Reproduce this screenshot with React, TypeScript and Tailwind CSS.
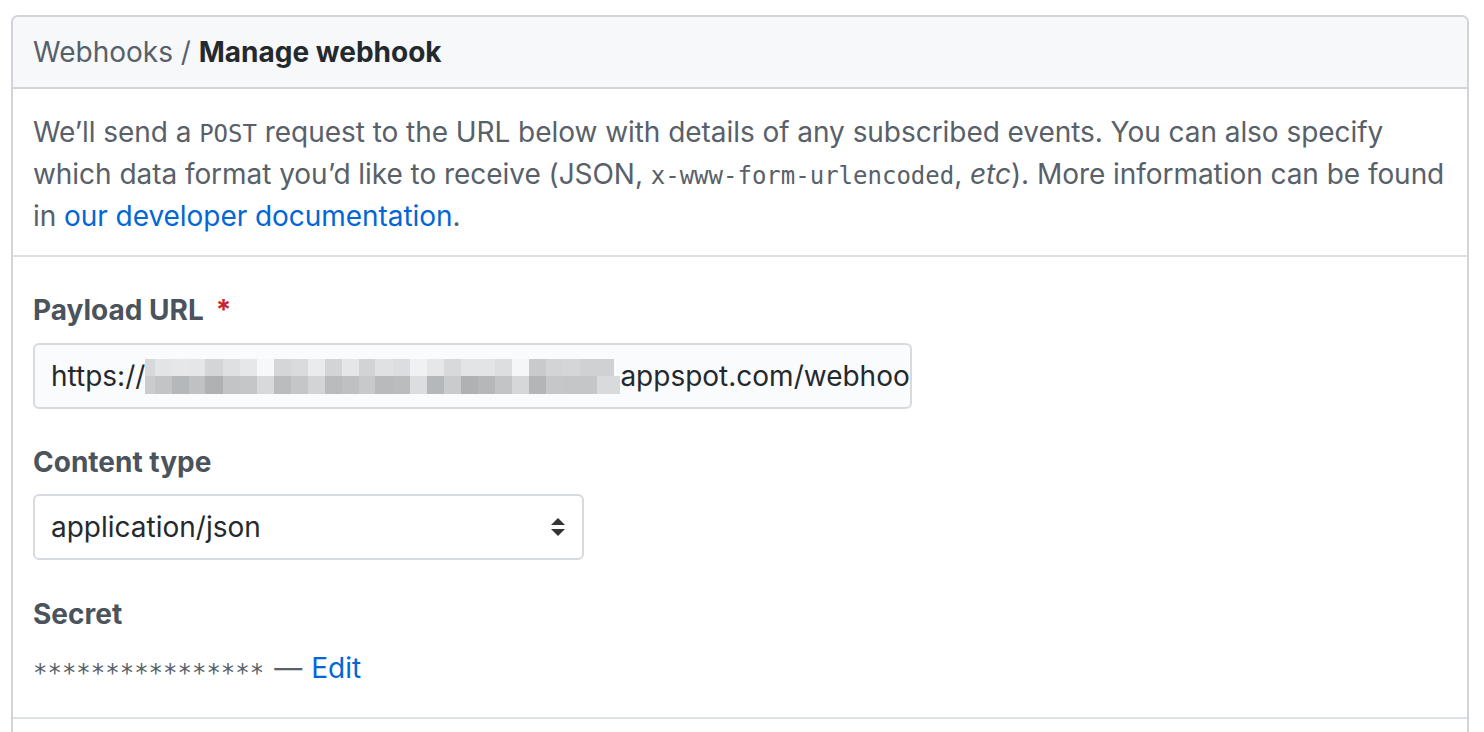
import React from 'react'

const font = { fontFamily: 'Inter, "Liberation Sans", sans-serif' }
const mono = { fontFamily: '"DejaVu Sans Mono", "Liberation Mono", monospace' }

// pixelated (redacted) part of the payload url: two rows of grey blocks
const blurTop = [
  ['#d7d8da', 10], ['#e3e4e6', 17], ['#e6e7e9', 17], ['#e5e6e8', 16], ['#d4d5d7', 18], ['#dfe0e2', 17],
  ['#e6e7e9', 17], ['#f7f8fa', 17], ['#d5d6d8', 17], ['#dadbdd', 17], ['#eaebed', 17], ['#d3d4d6', 17],
  ['#e5e6e8', 17], ['#d2d3d5', 16], ['#e0e1e3', 18], ['#dcdde0', 17], ['#f0f1f3', 17], ['#e6e7e9', 17],
  ['#d8d9db', 17], ['#e3e4e6', 17], ['#e3e4e6', 17], ['#dddee0', 17], ['#f5f6f8', 17], ['#c9cacc', 17],
  ['#d3d4d6', 17], ['#d5d6d8', 17], ['#d0d1d3', 17], ['#d0d1d3', 17], ['#fafbfc', 6],
] as const
const blurBottom = [
  ['#cbccce', 10], ['#c3c4c6', 17], ['#b5b8bb', 17], ['#c0c1c3', 16], ['#b0b1b3', 18], ['#c3c4c6', 17],
  ['#c5c6c8', 17], ['#d8d9db', 17], ['#bbbcbe', 17], ['#c5c6c8', 17], ['#d3d4d6', 17], ['#babbbd', 17],
  ['#bfc0c2', 17], ['#c8c9cb', 16], ['#b9babc', 18], ['#bbbcbe', 17], ['#dcdde0', 17], ['#b5b8ba', 17],
  ['#cacbcd', 17], ['#b0b1b3', 17], ['#b6b7b9', 17], ['#c3c4c6', 17], ['#d6d7d9', 17], ['#b4b5b7', 17],
  ['#c6c7c9', 17], ['#c5c6c8', 17], ['#c5c6c8', 17], ['#d9dadc', 23],
] as const

function Blur() {
  return (
    <span className="inline-flex flex-col align-middle">
      <span className="flex h-[17px]">
        {blurTop.map(([c, w], i) => (
          <span key={i} style={{ background: c, width: w }} className="h-full" />
        ))}
      </span>
      <span className="flex h-[18px]">
        {blurBottom.map(([c, w], i) => (
          <span key={i} style={{ background: c, width: w }} className="h-full" />
        ))}
      </span>
    </span>
  )
}

function SelectArrows() {
  return (
    <svg width="16" height="20" viewBox="0 0 16 20" className="text-[#333]">
      <path d="M8 1 L15 8 H1 Z" fill="currentColor" />
      <path d="M1 12 H15 L8 19 Z" fill="currentColor" />
    </svg>
  )
}

export default function App() {
  return (
    <div className="min-h-screen bg-white pt-[15px] pl-[11px] pr-[15px]" style={font}>
      <div className="rounded-t-[7px] border-2 border-b-0 border-[#d1d5da]">
        <div className="rounded-t-[6px] border-b-2 border-[#d1d5da] bg-[#f6f8fa] px-[20px] py-[14px] text-[28px] leading-[42px]">
          <span className="text-[#586069]">Webhooks / </span>
          <span className="font-bold text-[#24292e]">Manage webhook</span>
        </div>

        <div className="whitespace-nowrap border-b-2 border-[#dfe2e5] px-[20px] pt-[22px] pb-[18px] text-[28px] leading-[42px] tracking-[-0.05px] text-[#586069]">
          We’ll send a{' '}
          <code className="text-[24px] leading-none tracking-normal" style={mono}>
            POST
          </code>{' '}
          request to the URL below with details of any subscribed events. You can also specify
          <br />
          which data format you’d like to receive (JSON,{' '}
          <code className="text-[24px] leading-none tracking-normal" style={mono}>
            x-www-form-urlencoded
          </code>
          , <em>etc</em>). More information can be found
          <br />
          in <a className="text-[#0366d6]">our developer documentation</a>.
        </div>

        <div className="border-b-2 border-[#dfe2e5] px-[20px] pt-[32px] pb-[28px]">
          <label className="flex gap-[12px] text-[28px] leading-[42px] font-bold text-[#4b535c]">
            Payload URL <span className="text-[#cb2431]">*</span>
          </label>
          <div className="mt-[12px] flex h-[66px] w-[879px] items-center overflow-hidden whitespace-nowrap rounded-[6px] border-2 border-[#d7dbe0] bg-[#fafbfc] pl-[16px] text-[28px] text-[#24292e]">
            https://<Blur />appspot.com/webhooks
          </div>

          <label className="mt-[32px] block text-[28px] leading-[42px] font-bold text-[#4b535c]">Content type</label>
          <div className="mt-[11px] flex h-[66px] w-[551px] items-center justify-between rounded-[6px] border-2 border-[#d7dbe0] bg-white pl-[16px] pr-[16px] text-[28px] text-[#24292e]">
            <span>application/json</span>
            <SelectArrows />
          </div>

          <label className="mt-[33px] block text-[28px] leading-[42px] font-bold text-[#4b535c]">Secret</label>
          <div className="mt-[12px] flex items-center text-[28px] leading-[42px] text-[#586069]">
            <span className="relative top-[5px] text-[24px]" style={mono}>
              ****************
            </span>
            <span className="ml-[10px]">—</span>
            <a className="ml-[9px] text-[#0366d6]">Edit</a>
          </div>
        </div>
        <div className="h-[20px]" />
      </div>
    </div>
  )
}
